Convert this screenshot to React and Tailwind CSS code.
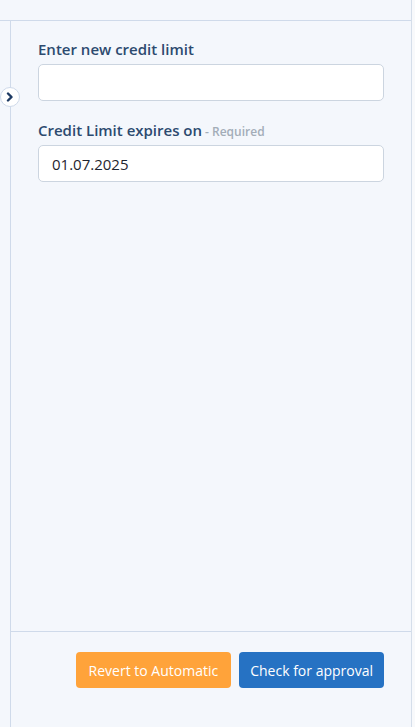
export default function App() {
  return (
    <div
      className="relative w-full h-[727px] bg-[#f8f9fb] overflow-hidden"
      style={{ fontFamily: "'Open Sans', 'Noto Sans', sans-serif" }}
    >
      <div className="flex flex-col w-[412px] h-full bg-[#f4f7fc] border-r border-[#d5deea]">
        <div className="h-[21px] shrink-0 border-b border-[#cfdaea]" />

        <div className="flex flex-1 min-h-0">
          <div className="w-[10px] shrink-0" />
          <div className="flex flex-col flex-1 border-l border-[#cfdaea]">
            <div className="flex-1 pl-[27px] pr-[27px] pt-[17px]">
              <label className="block">
                <span className="block h-[22px] text-[15px] leading-[22px] font-semibold text-[#2c4a6f]">
                  Enter new credit limit
                </span>
                <input
                  type="text"
                  className="mt-[4px] block w-full h-[37px] rounded-[5px] border border-[#ccd5e0] bg-white px-[13px] text-[15px] text-[#1f2530] outline-none"
                />
              </label>

              <label className="block mt-[18px]">
                <span className="block h-[22px] text-[15px] leading-[22px] font-semibold text-[#2c4a6f]">
                  Credit Limit expires on
                  <span className="ml-[3px] text-[12px] font-semibold text-[#a3adb8]">- Required</span>
                </span>
                <input
                  type="text"
                  defaultValue="01.07.2025"
                  className="mt-[4px] block w-full h-[37px] rounded-[5px] border border-[#ccd5e0] bg-white px-[13px] text-[15px] text-[#1f2530] outline-none"
                />
              </label>
            </div>

            <div className="h-[96px] shrink-0 border-t border-[#cfdaea] flex justify-end items-start pt-[20px] pr-[27px] gap-[8px]">
              <button className="h-[36px] px-[13px] rounded-[4px] bg-[#ffa33a] text-white text-[14px] font-medium">
                Revert to Automatic
              </button>
              <button className="h-[36px] px-[11px] rounded-[4px] bg-[#2672c3] text-white text-[14px] font-medium">
                Check for approval
              </button>
            </div>
          </div>
        </div>
      </div>

      <div className="absolute left-0 top-[87px] w-[20px] h-[20px] rounded-full bg-white border border-[#cfdaea] flex items-center justify-center">
        <svg width="8" height="10" viewBox="0 0 8 10" fill="none">
          <path d="M2 1.5 L5.5 5 L2 8.5" stroke="#1d3a63" strokeWidth="2.4" strokeLinecap="round" strokeLinejoin="round" />
        </svg>
      </div>
    </div>
  );
}
